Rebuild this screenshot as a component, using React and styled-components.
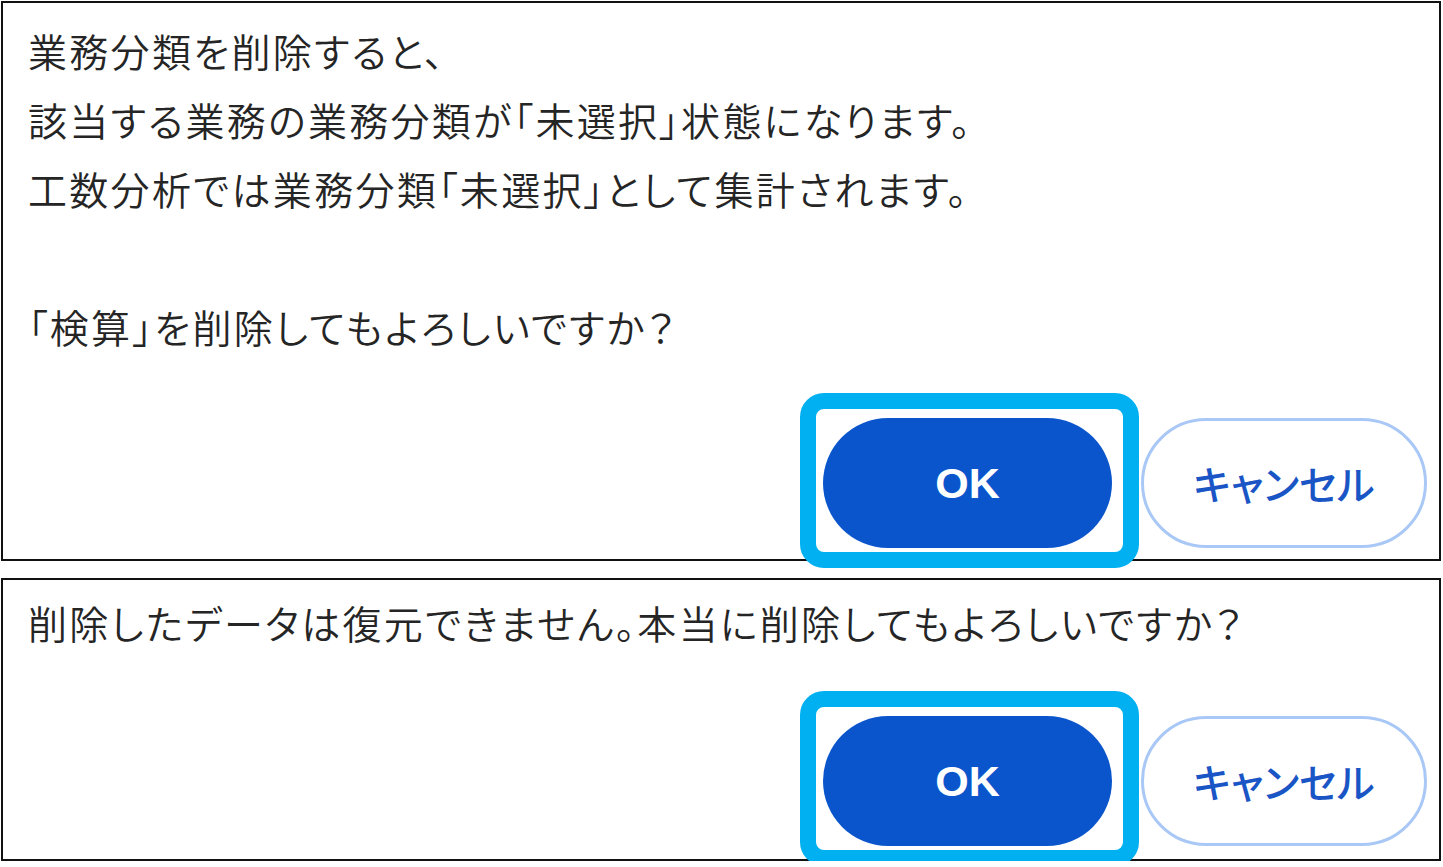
import styled, { createGlobalStyle } from 'styled-components'

const GlobalStyle = createGlobalStyle`
  body {
    margin: 0;
    background: #ffffff;
    font-family: "Noto Sans CJK JP", "Noto Sans", sans-serif;
  }
`

const Page = styled.div`
  display: flex;
  flex-direction: column;
  gap: 17px;
  padding: 1px 0 0 1px;
  width: 1440px;
`

const Dialog = styled.section`
  position: relative;
  box-sizing: border-box;
  width: 1440px;
  display: flex;
  flex-direction: column;
  border: 2px solid #111111;
  padding: ${(p) => p.$top}px 12px ${(p) => p.$bottom}px 25px;
`

const Message = styled.div`
  color: #252525;
  font-size: 39px;
  font-weight: 350;
  line-height: 69px;
  letter-spacing: 2.3px;
  font-feature-settings: "palt";
`

const Line = styled.p`
  margin: 0;
  min-height: 69px;
  white-space: nowrap;
`

const Actions = styled.div`
  display: flex;
  justify-content: flex-end;
  align-items: center;
  gap: 29px;
  margin-top: ${(p) => p.$gap}px;
`

const OkWrap = styled.div`
  position: relative;
  display: flex;
`

const Highlight = styled.span`
  position: absolute;
  top: -25px;
  left: -23px;
  right: -27px;
  bottom: -20px;
  border: 16px solid #00b0f0;
  border-radius: 24px;
  pointer-events: none;
  z-index: 2;
`

const PillButton = styled.button`
  box-sizing: border-box;
  height: 130px;
  border-radius: 65px;
  display: flex;
  align-items: center;
  justify-content: center;
  cursor: pointer;
  padding: 0;
`

const OkButton = styled(PillButton)`
  width: 289px;
  border: none;
  background: #0b55cc;
  color: #ffffff;
  font-family: "Liberation Sans", Arial, sans-serif;
  font-weight: 700;
  font-size: 43px;
`

const CancelButton = styled(PillButton)`
  width: 286px;
  border: 3px solid #a9c8f6;
  background: #ffffff;
  color: #1a55c6;
  font-family: "Noto Sans CJK JP", sans-serif;
  font-weight: 500;
  font-size: 40px;
  font-feature-settings: "palt";
`

function ConfirmDialog({ lines, top, bottom, gap }) {
  return (
    <Dialog $top={top} $bottom={bottom}>
      <Message>
        {lines.map((text, i) => (
          <Line key={i}>{text}</Line>
        ))}
      </Message>
      <Actions $gap={gap}>
        <OkWrap>
          <OkButton>OK</OkButton>
          <Highlight />
        </OkWrap>
        <CancelButton>キャンセル</CancelButton>
      </Actions>
    </Dialog>
  )
}

export default function App() {
  return (
    <>
      <GlobalStyle />
      <Page>
        <ConfirmDialog
          top={13}
          bottom={11}
          gap={57}
          lines={[
            '業務分類を削除すると、',
            '該当する業務の業務分類が「未選択」状態になります。',
            '工数分析では業務分類「未選択」として集計されます。',
            '',
            '「検算」を削除してもよろしいですか？',
          ]}
        />
        <ConfirmDialog
          top={8}
          bottom={13}
          gap={59}
          lines={['削除したデータは復元できません。本当に削除してもよろしいですか？']}
        />
      </Page>
    </>
  )
}
